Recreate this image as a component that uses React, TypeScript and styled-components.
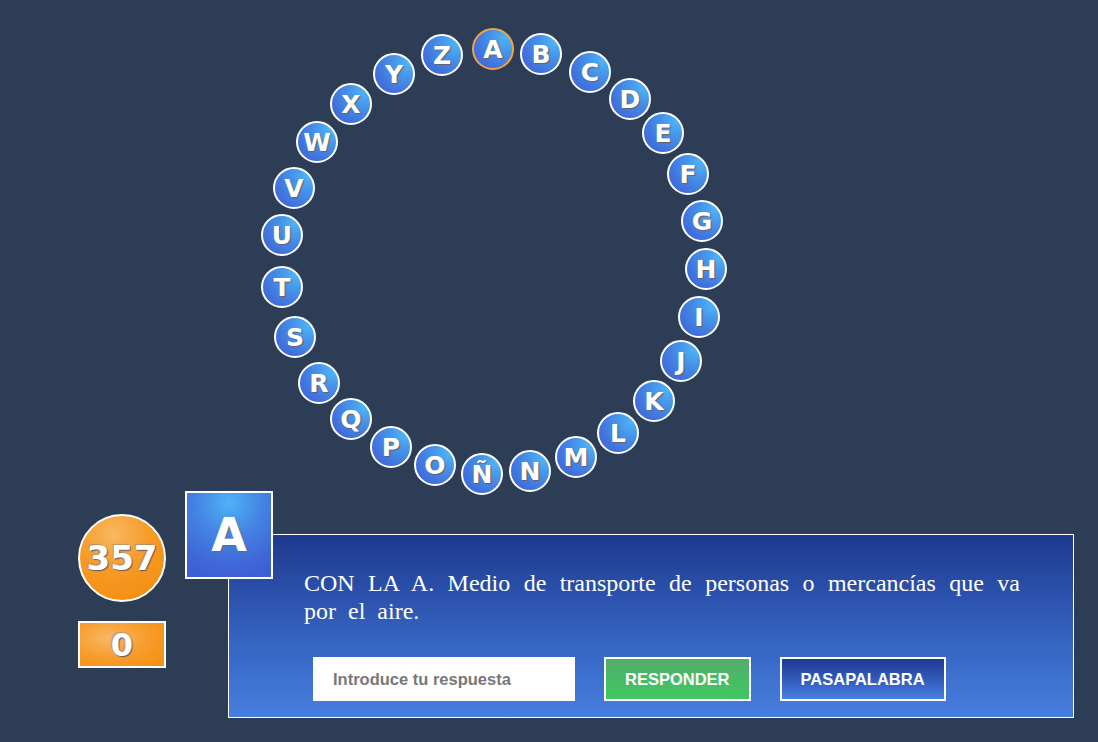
import React from "react";
import styled, { createGlobalStyle } from "styled-components";

// Letter positions on the rosco (centre of each bubble, px)
interface RoscoLetter {
  letter: string;
  x: number;
  y: number;
}

const letters: RoscoLetter[] = [
  { letter: "A", x: 493, y: 49 },
  { letter: "B", x: 541, y: 54 },
  { letter: "C", x: 590, y: 72 },
  { letter: "D", x: 630, y: 99 },
  { letter: "E", x: 663, y: 133 },
  { letter: "F", x: 688, y: 174 },
  { letter: "G", x: 702, y: 221 },
  { letter: "H", x: 706, y: 269 },
  { letter: "I", x: 699, y: 317 },
  { letter: "J", x: 681, y: 361 },
  { letter: "K", x: 654, y: 401 },
  { letter: "L", x: 618, y: 433 },
  { letter: "M", x: 576, y: 457 },
  { letter: "N", x: 530, y: 471 },
  { letter: "Ñ", x: 482, y: 474 },
  { letter: "O", x: 435, y: 465 },
  { letter: "P", x: 391, y: 447 },
  { letter: "Q", x: 351, y: 419 },
  { letter: "R", x: 319, y: 383 },
  { letter: "S", x: 295, y: 337 },
  { letter: "T", x: 282, y: 287 },
  { letter: "U", x: 282, y: 235 },
  { letter: "V", x: 294, y: 188 },
  { letter: "W", x: 317, y: 142 },
  { letter: "X", x: 351, y: 104 },
  { letter: "Y", x: 394, y: 74 },
  { letter: "Z", x: 442, y: 55 },
];

const BUBBLE = 42;

const GlobalStyle = createGlobalStyle`
  html, body {
    margin: 0;
    padding: 0;
    background: #2d3d56;
  }
  * {
    box-sizing: border-box;
  }
`;

const Page = styled.div`
  width: 1098px;
  height: 742px;
  background: #2d3d56;
  overflow: hidden;
`;

const Rosco = styled.div`
  position: relative;
  height: 491px;
`;

const Bubble = styled.div<{ $active?: boolean }>`
  position: absolute;
  width: ${BUBBLE}px;
  height: ${BUBBLE}px;
  border-radius: 50%;
  border: 2px solid ${(p) => (p.$active ? "#f0a444" : "#ffffff")};
  background: radial-gradient(
    circle at 85% 20%,
    #4db4f7 0%,
    #4692e9 35%,
    #406fdb 75%,
    #3c62d5 100%
  );
  display: flex;
  align-items: center;
  justify-content: center;
  color: #ffffff;
  font-family: "DejaVu Sans", Verdana, sans-serif;
  font-weight: bold;
  font-size: 25px;
  line-height: 1;
  text-shadow: 1px 1px 1px rgba(110, 90, 90, 0.9);
`;

const Bottom = styled.div`
  display: flex;
  align-items: flex-start;
  padding-left: 78px;
`;

const ScoreColumn = styled.div`
  display: flex;
  flex-direction: column;
  padding-top: 23px;
  gap: 19px;
`;

const ScoreText = `
  color: #ffffff;
  font-family: "DejaVu Sans", Verdana, sans-serif;
  font-weight: bold;
  font-size: 34px;
  line-height: 1;
  text-shadow: 1px 1px 1px rgba(80, 80, 110, 0.9), -1px -1px 1px rgba(120, 120, 150, 0.5);
`;

const ScoreCircle = styled.div`
  width: 88px;
  height: 88px;
  border-radius: 50%;
  border: 2px solid #ffffff;
  background: radial-gradient(
    circle at 40% 22%,
    #f8b860 0%,
    #f69a26 45%,
    #f48a0a 100%
  );
  display: flex;
  align-items: center;
  justify-content: center;
  ${ScoreText}
`;

const ZeroBox = styled.div`
  width: 88px;
  height: 47px;
  border: 2px solid #ffffff;
  background: radial-gradient(
    ellipse at 35% 35%,
    #f9b763 0%,
    #f79c2c 50%,
    #f68d0c 100%
  );
  display: flex;
  align-items: center;
  justify-content: center;
  ${ScoreText}
  font-size: 32px;
`;

const QuestionArea = styled.div`
  position: relative;
  margin-left: 19px;
  padding-top: 43px;
`;

const CurrentLetter = styled.div`
  position: absolute;
  top: 0;
  left: 0;
  z-index: 1;
  width: 88px;
  height: 88px;
  border: 2px solid #ffffff;
  background: radial-gradient(
    circle at 50% 12%,
    #4db3f6 0%,
    #4582e3 40%,
    #3f66d7 75%,
    #3c5dd2 100%
  );
  display: flex;
  align-items: center;
  justify-content: center;
  color: #ffffff;
  font-family: "DejaVu Sans", Verdana, sans-serif;
  font-weight: bold;
  font-size: 46px;
  line-height: 1;
  text-shadow: 1px 1px 1px rgba(120, 100, 100, 0.9);
`;

const Panel = styled.div`
  margin-left: 43px;
  width: 846px;
  height: 184px;
  border: 1px solid #ffffff;
  background: linear-gradient(to bottom, #1e398e 0%, #3462c0 55%, #477ede 100%);
  padding: 34px 53px 16px 75px;
`;

const Question = styled.p`
  margin: 0;
  color: #ffffff;
  font-family: "Liberation Serif", "Times New Roman", serif;
  font-size: 24px;
  line-height: 28px;
  word-spacing: 6px;
  text-align: justify;
`;

const Controls = styled.div`
  display: flex;
  align-items: center;
  gap: 29px;
  margin-top: 32px;
  padding-left: 9px;
`;

const AnswerInput = styled.input`
  width: 262px;
  height: 44px;
  border: none;
  outline: none;
  background: #ffffff;
  padding: 0 20px;
  font-family: "Liberation Sans", Arial, sans-serif;
  font-weight: bold;
  font-size: 16.5px;
  color: #333333;

  &::placeholder {
    color: #787878;
  }
`;

const Button = styled.button<{ $variant: "green" | "blue" }>`
  height: 44px;
  padding: 0 19px;
  border: 2px solid #ffffff;
  background: ${(p) =>
    p.$variant === "green"
      ? "linear-gradient(to bottom, #54ad6c 0%, #48bb66 50%, #40c762 100%)"
      : "linear-gradient(to bottom, #1f3a8f 0%, #3561c4 60%, #4a80e0 100%)"};
  color: #ffffff;
  font-family: "Liberation Sans", Arial, sans-serif;
  font-weight: bold;
  font-size: 16.5px;
  cursor: pointer;
`;

export default function App() {
  return (
    <Page>
      <GlobalStyle />
      <Rosco>
        {letters.map((l) => (
          <Bubble
            key={l.letter}
            $active={l.letter === "A"}
            style={{ left: l.x - BUBBLE / 2, top: l.y - BUBBLE / 2 }}
          >
            {l.letter}
          </Bubble>
        ))}
      </Rosco>
      <Bottom>
        <ScoreColumn>
          <ScoreCircle>357</ScoreCircle>
          <ZeroBox>0</ZeroBox>
        </ScoreColumn>
        <QuestionArea>
          <CurrentLetter>A</CurrentLetter>
          <Panel>
            <Question>
              CON LA A. Medio de transporte de personas o mercancías que va por
              el aire.
            </Question>
            <Controls>
              <AnswerInput placeholder="Introduce tu respuesta" />
              <Button $variant="green">RESPONDER</Button>
              <Button $variant="blue">PASAPALABRA</Button>
            </Controls>
          </Panel>
        </QuestionArea>
      </Bottom>
    </Page>
  );
}
